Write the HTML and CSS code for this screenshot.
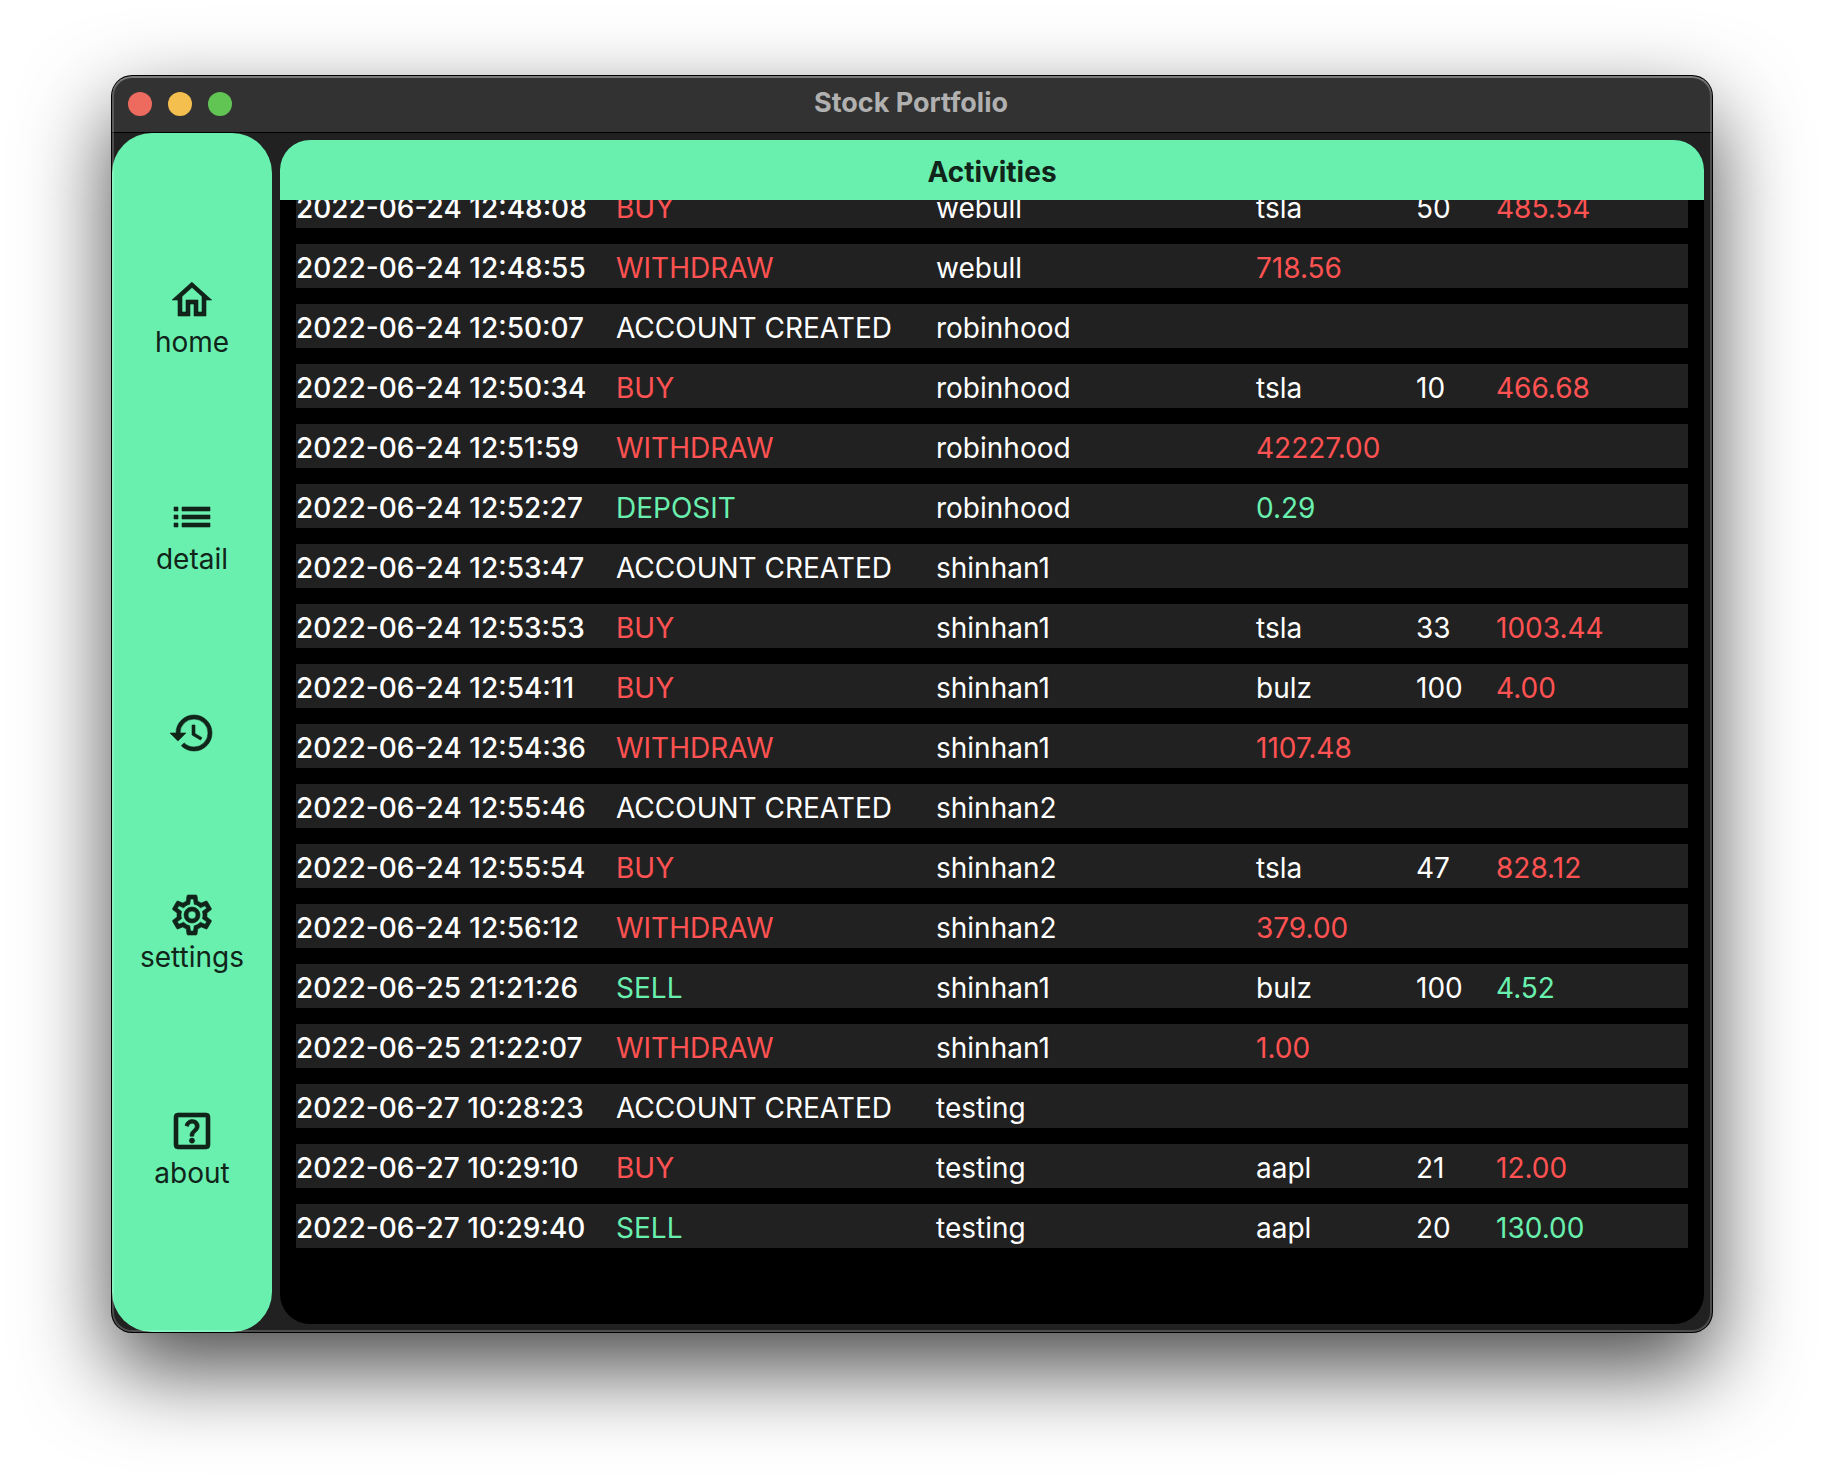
FILE: index.html
```html
<!DOCTYPE html>
<html lang="en">
<head>
<meta charset="utf-8">
<title>Stock Portfolio</title>
<link rel="stylesheet" href="styles.css">
</head>
<body>
<div class="window">
  <header class="titlebar">
    <div class="lights">
      <button class="light light-close" type="button" aria-label="Close"></button>
      <button class="light light-minimize" type="button" aria-label="Minimize"></button>
      <button class="light light-zoom" type="button" aria-label="Zoom"></button>
    </div>
    <h1 class="window-title">Stock Portfolio</h1>
  </header>
  <div class="content">
    <nav class="sidebar">
      <a class="nav-item" href="#home">
        <svg class="icon" viewBox="0 0 24 24" aria-hidden="true"><path d="M12 5.69L17 10.19V18H15V12H9V18H7V10.19L12 5.69M12 3L2 12H5V20H11V14H13V20H19V12H22"/></svg>
        <span>home</span>
      </a>
      <a class="nav-item" href="#detail">
        <svg class="icon" viewBox="0 0 24 24" aria-hidden="true"><path d="M3 13h2v-2H3v2zm0 4h2v-2H3v2zm0-8h2V7H3v2zm4 4h14v-2H7v2zm0 4h14v-2H7v2zM7 7v2h14V7H7z"/></svg>
        <span>detail</span>
      </a>
      <a class="nav-item" href="#activities" aria-label="activities" aria-current="page">
        <svg class="icon" viewBox="0 0 24 24" aria-hidden="true"><path d="M13.5,8H12V13L16.28,15.54L17,14.33L13.5,12.25V8M13,3A9,9 0 0,0 4,12H1L4.96,16.03L9,12H6A7,7 0 0,1 13,5A7,7 0 0,1 20,12A7,7 0 0,1 13,19C11.07,19 9.32,18.21 8.06,16.94L6.64,18.36C8.27,20 10.5,21 13,21A9,9 0 0,0 22,12A9,9 0 0,0 13,3"/></svg>
      </a>
      <a class="nav-item" href="#settings">
        <svg class="icon" viewBox="0 0 24 24" aria-hidden="true"><path d="M12,8A4,4 0 0,1 16,12A4,4 0 0,1 12,16A4,4 0 0,1 8,12A4,4 0 0,1 12,8M12,10A2,2 0 0,0 10,12A2,2 0 0,0 12,14A2,2 0 0,0 14,12A2,2 0 0,0 12,10M10,22C9.75,22 9.54,21.82 9.5,21.58L9.13,18.93C8.5,18.68 7.96,18.34 7.44,17.94L4.95,18.95C4.73,19.03 4.46,18.95 4.34,18.73L2.34,15.27C2.21,15.05 2.27,14.78 2.46,14.63L4.57,12.97L4.5,12L4.57,11L2.46,9.37C2.27,9.22 2.21,8.95 2.34,8.73L4.34,5.27C4.46,5.05 4.73,4.96 4.95,5.05L7.44,6.05C7.96,5.66 8.5,5.32 9.13,5.07L9.5,2.42C9.54,2.18 9.75,2 10,2H14C14.25,2 14.46,2.18 14.5,2.42L14.87,5.07C15.5,5.32 16.04,5.66 16.56,6.05L19.05,5.05C19.27,4.96 19.54,5.05 19.66,5.27L21.66,8.73C21.79,8.95 21.73,9.22 21.54,9.37L19.43,11L19.5,12L19.43,13L21.54,14.63C21.73,14.78 21.79,15.05 21.66,15.27L19.66,18.73C19.54,18.95 19.27,19.04 19.05,18.95L16.56,17.95C16.04,18.34 15.5,18.68 14.87,18.93L14.5,21.58C14.46,21.82 14.25,22 14,22H10M11.25,4L10.88,6.61C9.68,6.86 8.62,7.5 7.85,8.39L5.44,7.35L4.69,8.65L6.8,10.2C6.4,11.37 6.4,12.64 6.8,13.8L4.68,15.36L5.43,16.66L7.86,15.62C8.63,16.5 9.68,17.14 10.87,17.38L11.24,20H12.76L13.13,17.39C14.32,17.14 15.37,16.5 16.14,15.62L18.57,16.66L19.32,15.36L17.2,13.81C17.6,12.64 17.6,11.37 17.2,10.2L19.31,8.65L18.56,7.35L16.15,8.39C15.38,7.5 14.32,6.86 13.12,6.62L12.75,4H11.25Z"/></svg>
        <span>settings</span>
      </a>
      <a class="nav-item" href="#about">
        <svg class="icon" viewBox="0 0 24 24" aria-hidden="true"><path fill-rule="evenodd" d="M5 3H19A2 2 0 0 1 21 5V19A2 2 0 0 1 19 21H5A2 2 0 0 1 3 19V5A2 2 0 0 1 5 3M5 5V19H19V5Z"/><path d="M8.5 9.2C8.9 7.5 10.3 6.3 12.1 6.3C14.1 6.3 15.6 7.7 15.6 9.5C15.6 11 14.8 11.8 13.9 12.6C13.2 13.2 12.9 13.6 12.9 14.6H11C11 13 11.5 12.3 12.4 11.5C13.2 10.8 13.6 10.4 13.6 9.6C13.6 8.7 13 8.1 12.1 8.1C11.2 8.1 10.6 8.6 10.2 9.8Z"/><circle cx="12" cy="16.8" r="1.3"/></svg>
        <span>about</span>
      </a>
    </nav>
    <main class="panel">
      <h2 class="panel-title">Activities</h2>
      <div class="log">
        <table class="activities">
          <colgroup><col class="col-wide"><col class="col-wide"><col class="col-wide"><col class="col-symbol"><col class="col-count"><col></colgroup>
          <tbody>
            <tr><td class="time">2022-06-24 12:48:08</td><td class="out">BUY</td><td>webull</td><td>tsla</td><td>50</td><td class="out">485.54</td></tr>
            <tr><td class="time">2022-06-24 12:48:55</td><td class="out">WITHDRAW</td><td>webull</td><td class="out" colspan="3">718.56</td></tr>
            <tr><td class="time">2022-06-24 12:50:07</td><td>ACCOUNT CREATED</td><td colspan="4">robinhood</td></tr>
            <tr><td class="time">2022-06-24 12:50:34</td><td class="out">BUY</td><td>robinhood</td><td>tsla</td><td>10</td><td class="out">466.68</td></tr>
            <tr><td class="time">2022-06-24 12:51:59</td><td class="out">WITHDRAW</td><td>robinhood</td><td class="out" colspan="3">42227.00</td></tr>
            <tr><td class="time">2022-06-24 12:52:27</td><td class="in">DEPOSIT</td><td>robinhood</td><td class="in" colspan="3">0.29</td></tr>
            <tr><td class="time">2022-06-24 12:53:47</td><td>ACCOUNT CREATED</td><td colspan="4">shinhan1</td></tr>
            <tr><td class="time">2022-06-24 12:53:53</td><td class="out">BUY</td><td>shinhan1</td><td>tsla</td><td>33</td><td class="out">1003.44</td></tr>
            <tr><td class="time">2022-06-24 12:54:11</td><td class="out">BUY</td><td>shinhan1</td><td>bulz</td><td>100</td><td class="out">4.00</td></tr>
            <tr><td class="time">2022-06-24 12:54:36</td><td class="out">WITHDRAW</td><td>shinhan1</td><td class="out" colspan="3">1107.48</td></tr>
            <tr><td class="time">2022-06-24 12:55:46</td><td>ACCOUNT CREATED</td><td colspan="4">shinhan2</td></tr>
            <tr><td class="time">2022-06-24 12:55:54</td><td class="out">BUY</td><td>shinhan2</td><td>tsla</td><td>47</td><td class="out">828.12</td></tr>
            <tr><td class="time">2022-06-24 12:56:12</td><td class="out">WITHDRAW</td><td>shinhan2</td><td class="out" colspan="3">379.00</td></tr>
            <tr><td class="time">2022-06-25 21:21:26</td><td class="in">SELL</td><td>shinhan1</td><td>bulz</td><td>100</td><td class="in">4.52</td></tr>
            <tr><td class="time">2022-06-25 21:22:07</td><td class="out">WITHDRAW</td><td>shinhan1</td><td class="out" colspan="3">1.00</td></tr>
            <tr><td class="time">2022-06-27 10:28:23</td><td>ACCOUNT CREATED</td><td colspan="4">testing</td></tr>
            <tr><td class="time">2022-06-27 10:29:10</td><td class="out">BUY</td><td>testing</td><td>aapl</td><td>21</td><td class="out">12.00</td></tr>
            <tr><td class="time">2022-06-27 10:29:40</td><td class="in">SELL</td><td>testing</td><td>aapl</td><td>20</td><td class="in">130.00</td></tr>
          </tbody>
        </table>
      </div>
    </main>
  </div>
</div>
</body>
</html>
```
FILE: styles.css
```css
:root {
  --mint: #69f0ae;
  --ink: #10241a;
  --surface: #212121;
  --red: #ff5252;
}

* {
  box-sizing: border-box;
}

body {
  margin: 0;
  padding: 76px 112px 148px;
  background: #fff;
  color: #fff;
  font-family: Inter, "Liberation Sans", sans-serif;
  font-size: 28px;
  line-height: 34px;
}

.window {
  position: relative;
  overflow: hidden;
  border-radius: 20px;
  background: var(--surface);
  box-shadow: 0 0 0 1px #000, 0 36px 88px rgba(0, 0, 0, 0.72);
}

/* Light rim drawn over the window content */
.window::after {
  content: "";
  position: absolute;
  inset: 0;
  border-radius: inherit;
  box-shadow: inset 0 0 0 2px rgba(255, 255, 255, 0.2), inset 0 2px 0 rgba(255, 255, 255, 0.2);
  pointer-events: none;
}

.titlebar {
  display: grid;
  grid-template-columns: 1fr auto 1fr;
  align-items: center;
  height: 57px;
  padding: 0 16px;
  border-bottom: 1px solid #000;
  background: #323232;
}

.lights {
  display: flex;
  gap: 16px;
}

.light {
  width: 24px;
  height: 24px;
  padding: 0;
  border: 0;
  border-radius: 50%;
}

.light-close { background: #ed6a5e; }
.light-minimize { background: #f5bf4f; }
.light-zoom { background: #61c554; }

.window-title {
  margin: 0;
  padding: 0 2px 2px 0;
  color: #b0b0b0;
  font-size: 27px;
  font-weight: 700;
}

.content {
  display: flex;
}

.sidebar {
  display: flex;
  flex: none;
  flex-direction: column;
  justify-content: space-between;
  width: 160px;
  padding: 143px 0 142px;
  border-radius: 40px;
  background: var(--mint);
}

.nav-item {
  display: flex;
  flex-direction: column;
  align-items: center;
  gap: 1px;
  color: var(--ink);
  text-decoration: none;
}

.icon {
  width: 48px;
  height: 48px;
  fill: currentColor;
  stroke: currentColor;
  stroke-width: 0.3;
}

.panel {
  flex: 1;
  min-width: 0;
  margin: 7px 8px 8px;
  overflow: hidden;
  border-radius: 30px;
  background: #000;
}

.panel-title {
  margin: 0;
  padding: 15px 0 11px;
  background: var(--mint);
  color: var(--ink);
  font-size: 28px;
  font-weight: 700;
  text-align: center;
}

.log {
  overflow: hidden;
  padding: 0 16px 60px;
}

/* The list rests slightly scrolled, its first row under the title */
.activities {
  width: 100%;
  margin-top: -32px;
  border-spacing: 0 16px;
  table-layout: fixed;
}

.activities tr {
  background: var(--surface);
}

.activities td {
  padding: 7px 0 3px;
  white-space: nowrap;
}

.activities .time {
  font-weight: 450;
}

.col-wide { width: 320px; }
.col-symbol { width: 160px; }
.col-count { width: 80px; }

.in { color: var(--mint); }
.out { color: var(--red); }
```
